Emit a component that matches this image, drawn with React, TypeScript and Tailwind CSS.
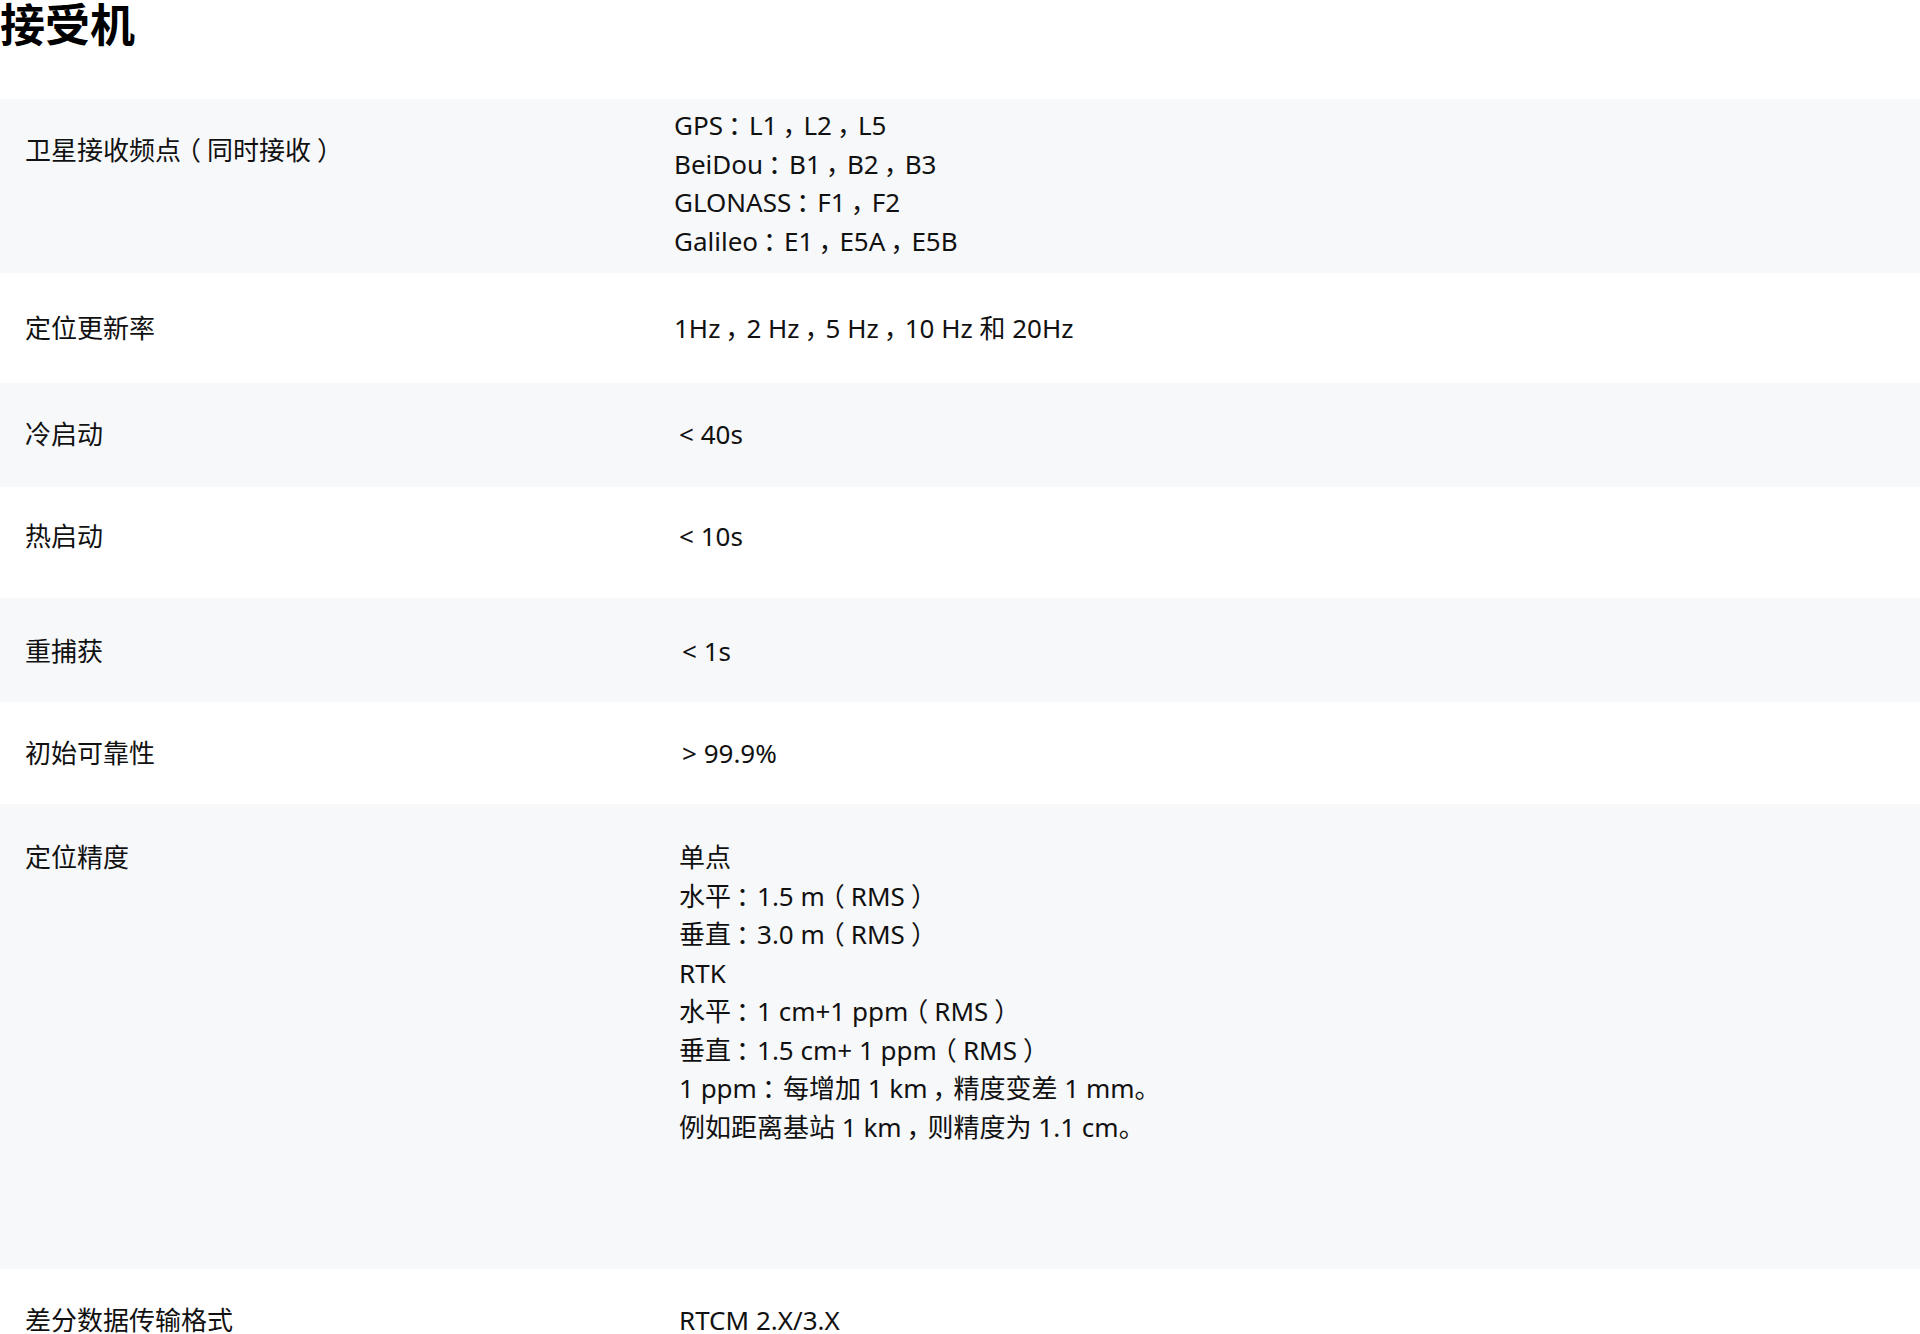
import React from "react";

type Row = {
  label: string;
  lines: string[];
  gray: boolean;
  rowCls: string;
  labelCls: string;
  valueCls: string;
};

const rows: Row[] = [
  {
    label: "卫星接收频点（同时接收）",
    lines: ["GPS：L1，L2，L5", "BeiDou：B1，B2，B3", "GLONASS：F1，F2", "Galileo：E1，E5A，E5B"],
    gray: true,
    rowCls: "h-[174px]",
    labelCls: "pt-[32px]",
    valueCls: "pt-[7px] pl-[2px]",
  },
  {
    label: "定位更新率",
    lines: ["1Hz，2 Hz，5 Hz，10 Hz 和 20Hz"],
    gray: false,
    rowCls: "h-[110px]",
    labelCls: "pt-[36px]",
    valueCls: "pt-[36px] pl-[2px]",
  },
  {
    label: "冷启动",
    lines: ["< 40s"],
    gray: true,
    rowCls: "h-[104px]",
    labelCls: "pt-[32px]",
    valueCls: "pt-[32px] pl-[7px]",
  },
  {
    label: "热启动",
    lines: ["< 10s"],
    gray: false,
    rowCls: "h-[111px]",
    labelCls: "pt-[30px]",
    valueCls: "pt-[30px] pl-[7px]",
  },
  {
    label: "重捕获",
    lines: ["< 1s"],
    gray: true,
    rowCls: "h-[104px]",
    labelCls: "pt-[34px]",
    valueCls: "pt-[34px] pl-[10px]",
  },
  {
    label: "初始可靠性",
    lines: ["> 99.9%"],
    gray: false,
    rowCls: "h-[102px]",
    labelCls: "pt-[32px]",
    valueCls: "pt-[32px] pl-[10px]",
  },
  {
    label: "定位精度",
    lines: [
      "单点",
      "水平：1.5 m（RMS）",
      "垂直：3.0 m（RMS）",
      "RTK",
      "水平：1 cm+1 ppm（RMS）",
      "垂直：1.5 cm+ 1 ppm（RMS）",
      "1 ppm：每增加 1 km，精度变差 1 mm。",
      "例如距离基站 1 km，则精度为 1.1 cm。",
    ],
    gray: true,
    rowCls: "h-[465px]",
    labelCls: "pt-[34px]",
    valueCls: "pt-[34px] pl-[7px]",
  },
  {
    label: "差分数据传输格式",
    lines: ["RTCM 2.X/3.X"],
    gray: false,
    rowCls: "h-[108px]",
    labelCls: "pt-[32px]",
    valueCls: "pt-[32px] pl-[7px]",
  },
];

function Fmt({ text }: { text: string }) {
  const parts: React.ReactNode[] = [];
  let buf = "";
  let k = 0;
  const flush = () => {
    if (buf) {
      parts.push(<React.Fragment key={k++}>{buf}</React.Fragment>);
      buf = "";
    }
  };
  for (const ch of Array.from(text)) {
    if (ch === "：" || ch === "，") {
      flush();
      parts.push(
        <span key={k++} className="ml-[5px] -mr-[5px]">
          {ch}
        </span>
      );
    } else if (ch === "（") {
      flush();
      parts.push(
        <span key={k++} className="-ml-[6px] mr-[6px]">
          {ch}
        </span>
      );
    } else if (ch === "）") {
      flush();
      parts.push(
        <span key={k++} className="ml-[6px] -mr-[6px]">
          {ch}
        </span>
      );
    } else {
      buf += ch;
    }
  }
  flush();
  return <>{parts}</>;
}

export default function App() {
  return (
    <div className="w-[1920px] bg-white text-[#111] font-['Noto_Sans','Noto_Sans_CJK_SC',sans-serif]">
      <h1 className="text-[45px] leading-[46px] font-bold text-black font-['Noto_Sans_CJK_SC',sans-serif] mb-[53px]">
        接受机
      </h1>
      <div className="flex flex-col">
        {rows.map((r, i) => (
          <div
            key={i}
            className={`grid grid-cols-[35%_65%] text-[26px] leading-[38.5px] ${r.rowCls} ${
              r.gray ? "bg-[#f7f8fa]" : "bg-white"
            }`}
          >
            <div className={`pl-[25px] ${r.labelCls}`}>
              <Fmt text={r.label} />
            </div>
            <div className={`${r.valueCls}`}>
              {r.lines.map((l, j) => (
                <div key={j}>
                  <Fmt text={l} />
                </div>
              ))}
            </div>
          </div>
        ))}
      </div>
    </div>
  );
}
